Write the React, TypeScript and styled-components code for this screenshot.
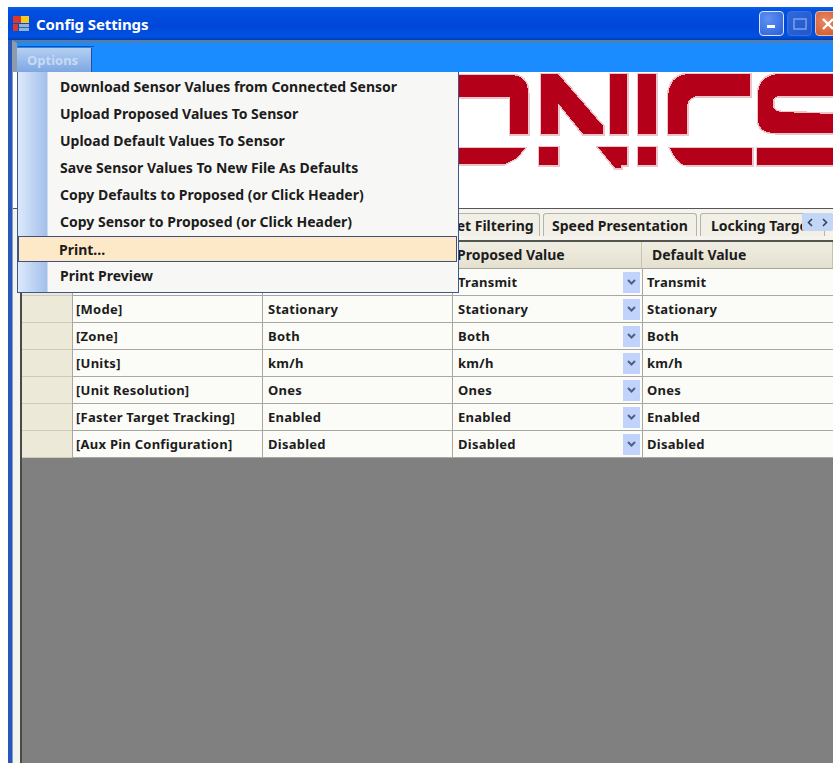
import * as React from "react";
import styled, { createGlobalStyle } from "styled-components";

const GlobalStyle = createGlobalStyle`
	html, body {
		margin: 0;
		height: 100%;
		overflow: hidden;
		background: #fff;
	}
	body {
		font-family: "Noto Sans", "Liberation Sans", sans-serif;
		font-size: 13px;
		font-weight: 700;
		color: #1c1c1c;
	}
`;

const Page = styled.div`
	width: 833px;
	height: 763px;
	padding: 7px 0 0 8px;
	box-sizing: border-box;
	overflow: hidden;
`;

const Window = styled.div`
	width: 825px;
	height: 756px;
	display: flex;
	flex-direction: column;
	position: relative;
	border-left: 4px solid #2a55bb;
	box-sizing: border-box;
`;

const TitleBar = styled.div`
	height: 33px;
	margin-left: -4px;
	flex: none;
	display: flex;
	align-items: center;
	padding-left: 5px;
	gap: 6px;
	background: linear-gradient(180deg, #0a5fe8 0%, #0050e0 12%, #0047d8 60%, #0052e4 88%, #003fae 100%);
`;

const TitleText = styled.div`
	color: #fff;
	font-size: 15px;
	font-weight: 700;
	letter-spacing: -0.1px;
	flex: 1;
`;

const Controls = styled.div`
	display: flex;
	gap: 3px;
	margin-right: -7px;
	align-items: center;
`;

const ControlButton = styled.div<{ $tone: "blue" | "dim" | "red" }>`
	width: 25px;
	height: 25px;
	flex: none;
	box-sizing: border-box;
	border-radius: 4px;
	display: flex;
	align-items: center;
	justify-content: center;
	border: 1px solid ${p => (p.$tone === "blue" ? "#d8e4fb" : p.$tone === "dim" ? "#3f6fd8" : "#e8c0a8")};
	background: ${p =>
		p.$tone === "red"
			? "radial-gradient(circle at 40% 40%, #e88a68, #d0501f)"
			: p.$tone === "dim"
				? "linear-gradient(135deg, #2f69dc, #1f56cc)"
				: "radial-gradient(circle at 35% 30%, #5f92f2, #2a5fd8)"};
`;

const MenuBand = styled.div`
	height: 32px;
	flex: none;
	box-sizing: border-box;
	border-top: 3px solid #4f7fb4;
	border-left: 5px solid #8d9bad;
	background: #1a8cff;
	display: flex;
	align-items: flex-end;
`;

const OptionsTab = styled.div`
	position: relative;
	width: 75px;
	height: 24px;
	box-sizing: border-box;
	border-right: 1px solid #23509c;
	background: linear-gradient(180deg, #b4cff2, #7ea7e2);
	color: #c6daf5;
	font-size: 13px;
	padding: 3px 0 0 10px;

	&::before {
		content: "";
		position: absolute;
		left: 1px;
		right: -3px;
		top: -2px;
		height: 1px;
		background: #23509c;
	}
`;

const Body = styled.div`
	flex: 1;
	min-height: 0;
	display: flex;
	flex-direction: column;
	border-left: 1px solid #7f9fc4;
	background: #f5f3ee;
`;

const LogoPanel = styled.div`
	height: 136px;
	flex: none;
	background: #fff;
	border-bottom: 1px solid #56565a;
	overflow: hidden;
`;

const TabStrip = styled.div`
	height: 33px;
	flex: none;
	margin-left: 7px;
	padding: 0 0 4px 400px;
	box-sizing: border-box;
	display: flex;
	align-items: flex-end;
	position: relative;
	overflow: hidden;
	background: #f5f3ee;
	border-bottom: 2px solid #55554f;
`;

const SheetTab = styled.div<{ $width: number }>`
	width: ${p => p.$width}px;
	flex: none;
	height: 23px;
	box-sizing: border-box;
	margin-right: 3px;
	border: 1px solid #b6b4a6;
	border-bottom: none;
	border-radius: 3px 3px 0 0;
	background: #f1efe6;
	font-size: 14px;
	line-height: 23px;
	white-space: nowrap;
	overflow: hidden;
	text-align: center;
`;

const TabScroller = styled.div`
	position: absolute;
	right: 0;
	top: 4px;
	width: 31px;
	height: 18px;
	background: #c4d6f6;
	border-radius: 2px;
	display: flex;
	align-items: center;
	justify-content: space-around;
`;

const GridArea = styled.div`
	flex: 1;
	margin-left: 7px;
	border-left: 2px solid #4a4a48;
	background: #808080;
	min-height: 0;
`;

const Table = styled.div`
	display: grid;
	grid-template-columns: 50px 190px 190px 190px 1fr;
	grid-auto-rows: 27px;
`;

const HeaderCell = styled.div<{ $left?: number }>`
	background: linear-gradient(180deg, #f0eee2, #e4e1d0);
	border-right: 1px solid #c6c3b2;
	border-bottom: 1px solid #a8a698;
	box-sizing: border-box;
	font-size: 14px;
	line-height: 26px;
	padding-left: ${p => p.$left ?? 4}px;
	white-space: nowrap;
`;

const RowHead = styled.div`
	background: #ece9d8;
	border-bottom: 1px solid #cfcbb6;
	box-sizing: border-box;
`;

const Cell = styled.div<{ $left?: number }>`
	position: relative;
	background: #fbfbf7;
	border-left: 1px solid #a8a8a0;
	border-bottom: 1px solid #a8a8a0;
	box-sizing: border-box;
	line-height: 26px;
	letter-spacing: 0.25px;
	padding-left: ${p => p.$left ?? 4}px;
	white-space: nowrap;
`;

const ComboArrow = styled.div`
	position: absolute;
	top: 3px;
	right: 2px;
	width: 17px;
	height: 21px;
	background: #c1d3fb;
	display: flex;
	align-items: center;
	justify-content: center;
`;

const Menu = styled.div`
	position: absolute;
	left: 5px;
	top: 65px;
	width: 442px;
	height: 221px;
	box-sizing: border-box;
	border: 1px solid #3e558f;
	border-top: none;
	background: linear-gradient(90deg, #dce9fb 0, #a3bfea 29px, #f7f7f5 30px);
	padding: 1px;
	z-index: 5;
`;

const MenuItem = styled.div<{ $active?: boolean }>`
	height: 27px;
	box-sizing: border-box;
	line-height: 27px;
	padding-left: 41px;
	font-size: 14px;
	white-space: nowrap;
	${p =>
		p.$active &&
		`
		height: 26px;
		margin: 1px 0 0 -1px;
		width: 439px;
		line-height: 25px;
		padding-left: 40px;
		border: 1px solid #3e4f80;
		background: #fde9c8;
	`}
`;

// logo drawn in window coordinates, so the viewBox starts at the panel's corner
const BrandLogo = () => (
	<svg
		width="820"
		height="136"
		viewBox="13 72 820 136"
		fill="#b40018"
		stroke="#eec4cb"
		strokeWidth="3"
		paintOrder="stroke"
		shapeRendering="crispEdges"
	>
		<path d="M440 75h70q18 0 18 18v41h-18V97h-70z" />
		<path d="M440 148h85l-8 10-12 6h-65z" />
		<path d="M541 74h17l45 52v8h-20l-25-31v31h-17z" />
		<path d="M539 147h19v18h-19z" />
		<path d="M598 147h29v18h-6v3h-6z" />
		<path d="M610 74h17v60h-17z" />
		<path d="M638 74h18v60h-18z" />
		<path d="M638 147h18v18h-18z" />
		<path d="M690 74h60v22h-50q-13 0-13 12v26h-19V100q0-26 22-26z" />
		<path d="M670 148h82v17h-66q-8 0-16-17z" />
		<path d="M782 74h51v22h-52q-8 0-8 6v4q0 5 8 6l52 2v19h-58q-17 0-17-14V96q0-22 24-22z" />
		<path d="M757 148h76v17h-76z" />
	</svg>
);

const Chevron = () => (
	<svg width="9" height="7" viewBox="0 0 9 7" fill="none" stroke="#4d6185" strokeWidth="2">
		<path d="M1 1l3.5 3.5L8 1" />
	</svg>
);

const WindowIcon = () => (
	<svg width="17" height="17" viewBox="0 0 17 17">
		<rect x="0" y="1" width="8" height="7" fill="#d8392a" />
		<rect x="8" y="1" width="8" height="7" fill="#f6c91f" />
		<rect x="0" y="9" width="5" height="7" fill="#d8392a" />
		<rect x="6" y="9" width="10" height="7" fill="#8fb2d8" />
		<rect x="6" y="12" width="10" height="1" fill="#3f5f9f" />
	</svg>
);

const menuItems = [
	"Download Sensor Values from Connected Sensor",
	"Upload Proposed Values To Sensor",
	"Upload Default Values To Sensor",
	"Save Sensor Values To New File As Defaults",
	"Copy Defaults to Proposed (or Click Header)",
	"Copy Sensor to Proposed (or Click Header)",
];

const rows = [
	["", "", "Transmit", "Transmit"],
	["[Mode]", "Stationary", "Stationary", "Stationary"],
	["[Zone]", "Both", "Both", "Both"],
	["[Units]", "km/h", "km/h", "km/h"],
	["[Unit Resolution]", "Ones", "Ones", "Ones"],
	["[Faster Target Tracking]", "Enabled", "Enabled", "Enabled"],
	["[Aux Pin Configuration]", "Disabled", "Disabled", "Disabled"],
];

const App = () => (
	<Page>
		<GlobalStyle />
		<Window>
			<TitleBar>
				<WindowIcon />
				<TitleText>Config Settings</TitleText>
				<Controls>
					<ControlButton $tone="blue">
						<svg width="9" height="9" viewBox="0 0 9 9">
							<rect x="0" y="6" width="8" height="3" fill="#fff" />
						</svg>
					</ControlButton>
					<ControlButton $tone="dim">
						<svg width="14" height="13" viewBox="0 0 14 13" fill="none" stroke="#7fa0e6" strokeWidth="1.5">
							<rect x="1" y="2" width="12" height="10" />
						</svg>
					</ControlButton>
					<ControlButton $tone="red">
						<svg width="14" height="14" viewBox="0 0 14 14" stroke="#fff" strokeWidth="2.4">
							<path d="M2 2l10 10M12 2L2 12" />
						</svg>
					</ControlButton>
				</Controls>
			</TitleBar>
			<MenuBand>
				<OptionsTab>Options</OptionsTab>
			</MenuBand>
			<Body>
				<LogoPanel>
					<BrandLogo />
				</LogoPanel>
				<TabStrip>
					<SheetTab $width={120}>Target Filtering</SheetTab>
					<SheetTab $width={154}>Speed Presentation</SheetTab>
					<SheetTab $width={125}>Locking Target</SheetTab>
					<TabScroller>
						<svg width="6" height="9" viewBox="0 0 6 9" fill="none" stroke="#33415f" strokeWidth="1.6">
							<path d="M5 1L1.5 4.5L5 8" />
						</svg>
						<svg width="6" height="9" viewBox="0 0 6 9" fill="none" stroke="#33415f" strokeWidth="1.6">
							<path d="M1 1l3.5 3.5L1 8" />
						</svg>
					</TabScroller>
				</TabStrip>
				<GridArea>
					<Table>
						<HeaderCell />
						<HeaderCell />
						<HeaderCell />
						<HeaderCell $left={5}>Proposed Value</HeaderCell>
						<HeaderCell $left={10}>Default Value</HeaderCell>
						{rows.map((row, index) => (
							<React.Fragment key={index}>
								<RowHead />
								<Cell $left={3}>{row[0]}</Cell>
								<Cell $left={5}>{row[1]}</Cell>
								<Cell $left={5}>
									{row[2]}
									<ComboArrow>
										<Chevron />
									</ComboArrow>
								</Cell>
								<Cell>{row[3]}</Cell>
							</React.Fragment>
						))}
					</Table>
				</GridArea>
			</Body>
			<Menu>
				{menuItems.map(item => (
					<MenuItem key={item}>{item}</MenuItem>
				))}
				<MenuItem $active>Print...</MenuItem>
				<MenuItem>Print Preview</MenuItem>
			</Menu>
		</Window>
	</Page>
);

export default App;
